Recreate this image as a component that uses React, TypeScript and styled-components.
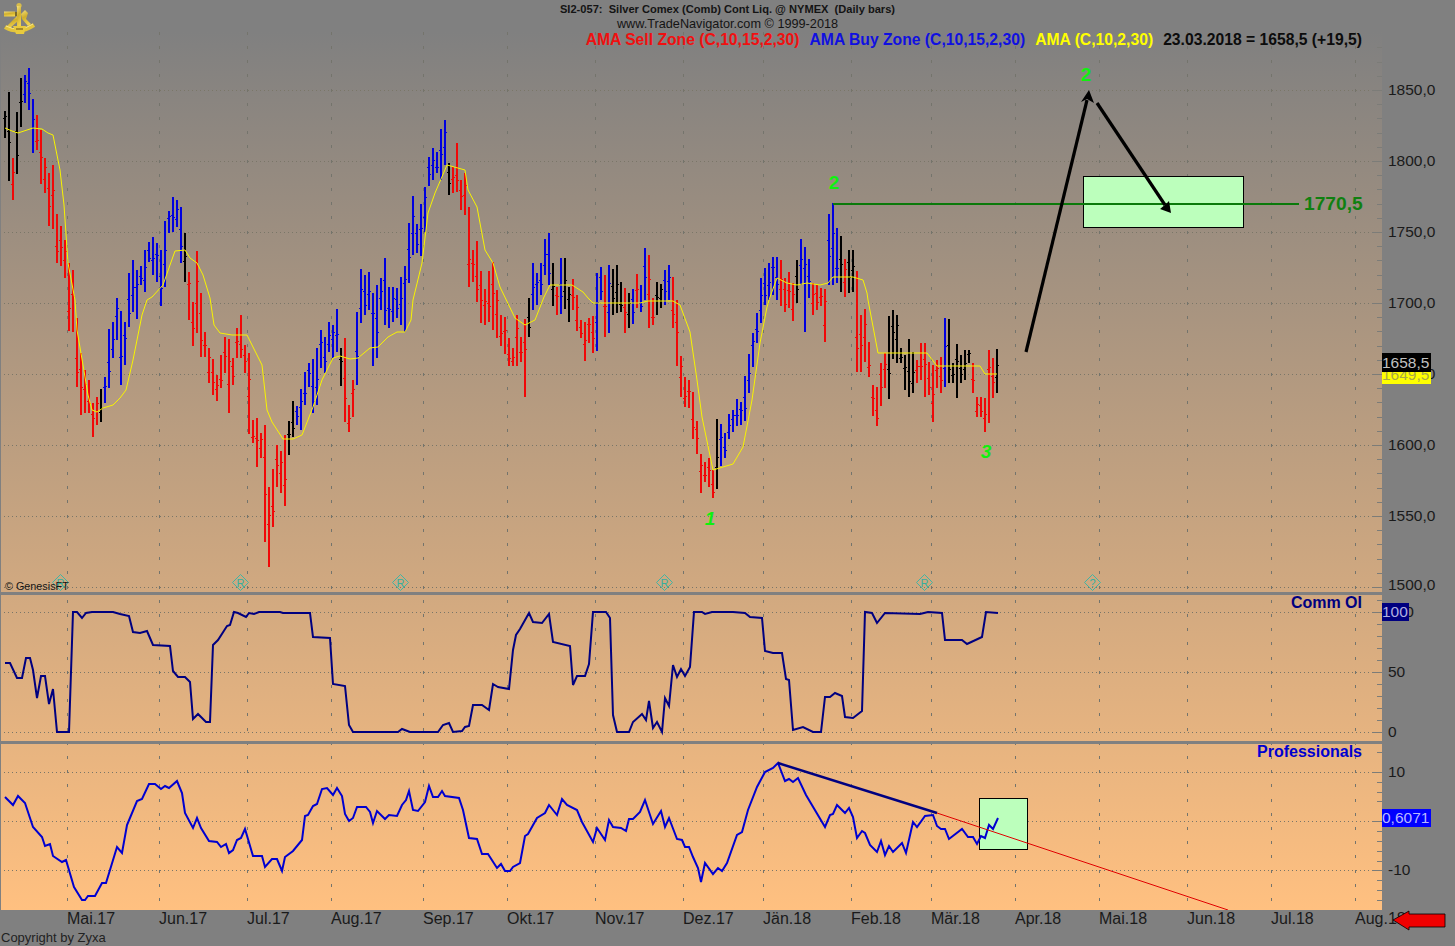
import styled, { createGlobalStyle } from "styled-components";

const CHART_W = 1382;
const TOP = 32;

const GlobalStyle = createGlobalStyle`
  html, body {
    margin: 0;
    padding: 0;
    background: #808080;
    font-family: "Liberation Sans", Arial, sans-serif;
    overflow: hidden;
  }
`;

const Screen = styled.div`
  position: relative;
  display: grid;
  grid-template-columns: ${CHART_W}px 73px;
  grid-template-rows: ${TOP}px 878px 36px;
  width: 1455px;
  height: 946px;
  background: #808080;
  overflow: hidden;
`;

const TopBar = styled.header`
  grid-column: 1 / 3;
  position: relative;
  display: flex;
  flex-direction: column;
  align-items: center;
  padding-top: 2px;
  color: #141414;
`;

const ChartTitle = styled.div`
  font-size: 11.1px;
  font-weight: 700;
  line-height: 14px;
  white-space: pre;
`;

const ChartSource = styled.div`
  font-size: 12.7px;
  line-height: 17px;
  white-space: pre;
`;

const LogoMark = styled.svg`
  position: absolute;
  left: 3px;
  top: 2px;
  width: 33px;
  height: 34px;
  z-index: 3;
`;

const Plot = styled.main`
  display: flex;
  flex-direction: column;
  background: linear-gradient(180deg, #808080 0%, #ffc080 100%);
  box-shadow: inset 1px 0 0 #808080;
`;

const Panel = styled.section<{ $h: number }>`
  position: relative;
  display: flex;
  flex-direction: column;
  flex: 0 0 ${(p) => p.$h}px;
  height: ${(p) => p.$h}px;
`;

const Separator = styled.div`
  flex: 0 0 3px;
  background: #808080;
`;

const ChartSvg = styled.svg`
  position: absolute;
  left: 0;
  top: 0;
  width: 100%;
  height: 100%;
  display: block;
`;

const Legend = styled.div`
  position: relative;
  z-index: 2;
  display: flex;
  justify-content: flex-end;
  gap: 10px;
  padding-right: 20px;
  height: 15px;
  font-size: 15.7px;
  font-weight: 700;
  line-height: 15px;
  white-space: nowrap;
`;

const LegendItem = styled.span<{ $color: string }>`
  color: ${(p) => p.$color};
`;

const PaneName = styled.div<{ $color: string }>`
  position: relative;
  z-index: 2;
  align-self: flex-end;
  padding-right: 20px;
  font-size: 16px;
  font-weight: 700;
  line-height: 15px;
  color: ${(p) => p.$color};
`;

const Credit = styled.div`
  position: relative;
  z-index: 2;
  margin-top: auto;
  margin-bottom: -1px;
  padding-left: 5px;
  font-size: 10.8px;
  line-height: 14px;
  color: #141414;
`;

const PriceAxis = styled.aside`
  position: relative;
  display: flex;
  flex-direction: column;
  padding-left: 6px;
  color: #1a1a1a;
`;

const AxisLabel = styled.div<{ $gap: number }>`
  flex: 0 0 18px;
  margin-top: ${(p) => p.$gap}px;
  font-size: 15.5px;
  line-height: 18px;
  white-space: nowrap;
`;

const ValueTag = styled.div<{ $y: number; $h: number; $w: number; $bg: string; $fg: string }>`
  position: absolute;
  left: 0;
  top: ${(p) => p.$y - TOP}px;
  width: ${(p) => p.$w}px;
  height: ${(p) => p.$h}px;
  background: ${(p) => p.$bg};
  color: ${(p) => p.$fg};
  font-size: 15.5px;
  line-height: ${(p) => p.$h}px;
  overflow: hidden;
  white-space: nowrap;
`;

const BottomBar = styled.footer`
  grid-column: 1 / 3;
  position: relative;
  display: flex;
  flex-direction: column;
  color: #1a1a1a;
`;

const MonthRow = styled.div`
  display: flex;
  height: 18px;
  padding-left: 67px;
`;

const Month = styled.span<{ $w: number }>`
  flex: 0 0 ${(p) => p.$w}px;
  font-size: 16px;
  line-height: 18px;
  white-space: nowrap;
`;

const Copyright = styled.div`
  margin-top: 3px;
  padding-left: 1px;
  font-size: 13px;
  line-height: 14px;
  color: #222;
`;

const ScrollArrow = styled.svg`
  position: absolute;
  right: 8px;
  top: 0;
  width: 55px;
  height: 21px;
`;

const WaveMark = styled.text<{ $italic?: boolean }>`
  font-family: "Liberation Sans", Arial, sans-serif;
  font-size: 19px;
  font-weight: 700;
  font-style: ${(p) => (p.$italic ? "italic" : "normal")};
  fill: #10f010;
  text-anchor: middle;
`;

const TargetLabel = styled.text`
  font-family: "Liberation Sans", Arial, sans-serif;
  font-size: 19.2px;
  font-weight: 700;
  fill: #108010;
`;

const DiamondLetter = styled.text`
  font-family: "Liberation Sans", Arial, sans-serif;
  font-size: 11px;
  fill: #35b0a0;
  text-anchor: middle;
`;

// price bars read off the chart: colour, high y - low y, one bar every 4px
const BAR_DATA = `k111-138 k92-181 r158-200 k112-174 k78-127 b75-103 b68-110 b99-153 r115-150 r130-184
r158-193 r173-226 r165-229 r214-263 r226-266 r240-278 r263-331 r270-332 r318-387 r353-415
r370-413 r380-413 r403-437 r397-425 k389-422 b377-403 b329-388 b322-358 b298-340 b311-385
b322-365 b273-327 b260-312 b270-319 b266-285 b250-292 b242-262 b237-275 b243-282 b250-306
b221-287 b211-233 b197-232 b200-227 b207-263 k233-282 r272-320 r302-346 r251-333 r293-357
r332-357 r348-383 r359-395 r375-401 r355-388 r337-373 r339-413 r358-385 r328-358 r315-358
r345-373 r353-434 r420-443 r418-467 r433-458 r425-542 r487-567 r469-527 r445-487 r451-493
r435-506 k421-455 k401-437 b406-425 b389-430 b372-405 b363-387 b359-413 b348-405 b330-368
b337-373 b322-352 b325-358 b309-352 k348-386 r338-422 r405-432 r380-417 b312-385 b269-323
b275-315 b272-310 b293-366 b285-358 b278-310 b258-325 b287-328 b287-322 b288-318 b277-325
b266-332 b223-283 b196-255 b224-253 b204-256 b187-232 b157-186 b148-180 b152-173 b129-180
b120-165 k163-195 r167-193 r143-192 r180-210 r173-215 r207-287 r250-282 r241-302 r271-323
r289-325 r271-322 r262-330 r290-338 r315-346 r317-354 r338-366 r348-366 r315-366 r337-362
r319-397 k298-337 b263-310 b273-305 b263-295 b239-275 b233-285 k263-306 r287-315 b258-314
k258-309 k287-322 r279-310 r295-331 r320-338 r322-361 r318-343 r316-353 b273-351 b267-300
r275-337 b265-333 k269-315 k265-313 k282-312 r288-333 k293-328 b289-324 r274-308 b285-312
b248-300 r255-328 r298-325 k282-315 k284-308 b270-305 b265-300 r277-328 r300-366 r356-397
r377-407 r380-408 r392-439 r421-454 r454-493 r462-482 r458-487 r470-498 k419-489 b424-466
b433-458 b414-439 b410-432 b399-426 b402-425 b376-421 b354-393 b333-367 b313-343 b278-323
b268-305 b263-300 b257-295 b257-300 r260-306 r278-312 r272-308 r283-321 k260-303 b239-285
b247-332 b259-298 r283-315 r285-310 r288-306 r289-342 b214-285 b203-285 b228-283 k236-292
r259-297 k250-293 k250-292 r271-372 r315-372 r309-362 r342-377 r385-416 r387-426 r363-406
r353-388 k316-399 k310-359 k315-363 k348-363 k355-390 k339-397 k352-393 r360-383 r343-380
r343-397 r362-395 r365-422 r360-388 r357-393 b318-387 k319-383 k363-383 k344-398 k355-383
k350-380 k350-363 r363-393 r397-417 r397-417 r398-432 r350-423 r358-398 k349-393`;

const BAR_COLORS: Record<string, string> = { r: "#f00808", b: "#0000e0", k: "#000000" };

const AMA_LINE =
  "5,128 12,131 18,133 24,131 33,128 42,129 48,133 53,135 56,150 60,170 64,205 68,263 75,300 77,330 83,365 88,395 92,410 97,412 103,408 113,405 120,398 126,390 133,360 137,340 142,315 147,300 152,297 163,285 170,265 175,251 185,250 190,258 197,263 203,275 210,298 214,325 220,333 232,335 247,335 262,365 267,410 272,422 283,439 293,439 302,435 313,407 322,380 333,358 340,356 350,359 358,358 370,348 378,347 388,337 397,332 405,332 411,320 413,300 422,263 428,213 435,193 447,165 465,170 468,190 477,207 485,250 493,263 500,287 515,318 525,325 535,320 544,297 550,285 558,285 572,285 583,292 588,298 593,303 610,303 640,303 648,301 673,301 680,305 690,332 697,380 702,417 713,470 733,464 743,447 752,400 760,343 767,307 770,297 777,278 787,283 797,285 807,283 820,285 828,283 833,277 853,277 863,280 867,293 868,300 878,353 927,353 937,366 980,366 985,374 997,374";

const COMM_LINE =
  "5,663 10,663 17,678 22,678 26,658 30,658 33,670 37,698 41,676 45,676 49,704 53,689 57,732 69,732 73,612 77,612 82,618 86,613 92,612 113,612 120,614 129,616 133,632 140,633 147,631 153,645 170,646 173,671 178,677 185,677 190,682 193,719 198,714 206,722 210,722 213,645 218,640 227,626 230,625 234,612 238,613 246,617 249,613 254,614 259,612 280,612 283,613 310,613 313,637 330,638 333,684 345,686 349,725 353,732 398,732 402,729 410,732 438,732 443,725 449,723 453,732 462,731 465,727 469,726 473,705 482,705 489,710 493,684 498,687 509,689 513,650 516,635 520,629 529,613 533,622 542,623 549,614 553,642 570,646 573,685 577,676 585,676 589,664 593,612 606,612 610,618 613,715 617,732 629,732 633,722 642,714 646,720 649,701 653,728 657,722 662,732 665,698 669,706 673,665 677,677 681,669 685,676 690,667 694,612 702,612 705,614 712,612 733,612 745,613 750,617 762,618 765,651 773,653 782,653 786,679 789,680 793,730 803,727 813,732 821,732 825,697 830,697 835,693 842,696 845,717 853,718 862,711 865,612 872,613 877,623 885,613 920,614 928,612 942,613 945,640 962,640 967,644 982,637 986,612 998,613";

const PRO_LINE =
  "5,797 13,805 18,796 25,803 33,827 42,837 45,846 50,844 53,856 62,862 66,860 74,887 82,900 85,900 88,896 95,896 102,883 106,883 117,847 122,853 127,825 137,801 142,799 149,784 155,784 161,789 165,786 169,788 177,781 182,793 185,813 193,828 197,818 201,828 209,841 217,842 221,847 226,844 229,853 233,850 237,840 241,838 245,829 253,856 262,856 265,867 272,859 277,859 282,871 285,857 293,851 302,840 305,816 308,815 313,806 317,804 322,789 327,788 333,795 337,788 342,796 345,814 349,821 353,818 357,807 366,807 370,812 373,823 377,811 385,819 389,815 397,816 402,805 406,800 409,791 413,810 418,811 425,802 429,786 433,797 438,797 442,791 445,796 459,798 463,810 469,838 477,839 482,854 488,854 497,868 501,864 505,871 510,871 513,867 520,863 525,836 528,834 537,818 545,813 549,805 557,815 562,799 567,805 577,810 582,822 593,842 597,828 605,840 609,820 613,827 621,828 626,831 629,819 633,819 640,812 645,800 653,824 661,811 665,827 669,818 677,839 682,840 685,847 689,847 693,857 698,868 701,882 705,863 713,874 718,868 722,871 727,863 737,835 742,832 748,810 757,787 765,772 773,768 778,763 785,781 789,779 793,782 798,778 806,795 825,827 830,815 833,814 837,805 845,813 849,808 853,817 857,838 862,831 865,833 870,845 877,852 881,841 885,855 889,846 893,852 902,843 906,853 913,822 917,827 925,816 933,815 937,826 941,829 945,829 949,839 962,829 968,837 973,837 977,844 981,836 985,838 989,825 993,829 998,818";

const MONTHS: [string, number][] = [
  ["Mai.17", 67], ["Jun.17", 159], ["Jul.17", 247], ["Aug.17", 331], ["Sep.17", 423], ["Okt.17", 507],
  ["Nov.17", 595], ["Dez.17", 683], ["Jän.18", 763], ["Feb.18", 851], ["Mär.18", 931], ["Apr.18", 1015],
  ["Mai.18", 1099], ["Jun.18", 1187], ["Jul.18", 1271], ["Aug.18", 1355],
];

const AXIS_LABELS: [string, number][] = [
  ["1850,0", 90], ["1800,0", 161], ["1750,0", 232], ["1700,0", 303], ["1650,0", 374], ["1600,0", 445],
  ["1550,0", 516], ["1500,0", 585], ["100", 612], ["50", 672], ["0", 732], ["10", 772], ["0", 821], ["-10", 870],
];

const DIAMONDS: [number, string][] = [[60, "R"], [240, "R"], [400, "R"], [664, "R"], [924, "R"], [1092, "?"]];

const bars = BAR_DATA.trim().split(/\s+/).map((token, i) => {
  const [hi, lo] = token.slice(1).split("-").map(Number);
  const x = 5 + 4 * i;
  const open = Math.round(hi + (lo - hi) * (0.25 + ((i * 0.37) % 1) * 0.5));
  const close = Math.round(hi + (lo - hi) * (0.2 + ((i * 0.61) % 1) * 0.6));
  return { color: token[0], x, hi, lo, open, close };
});

const barPath = (color: string) =>
  bars
    .filter((b) => b.color === color)
    .map((b) => `M${b.x} ${b.hi}V${b.lo}`)
    .join("");

const barTicks = (color: string) =>
  bars
    .filter((b) => b.color === color)
    .map((b) => `M${b.x - 2} ${b.open + 0.5}h1M${b.x + 1} ${b.close + 0.5}h1`)
    .join("");

const GridLines = ({ rows, ticks }: { rows: number[]; ticks: number[] }) => (
  <g shapeRendering="crispEdges" fill="none">
    {MONTHS.map(([name, x]) => (
      <line
        key={name}
        x1={x + 0.5}
        x2={x + 0.5}
        y1={TOP}
        y2={910}
        stroke="#74746c"
        strokeDasharray="3 11.2"
        strokeDashoffset="0.2"
      />
    ))}
    {rows.map((y) => (
      <line key={y} x1={4} x2={1372} y1={y + 0.5} y2={y + 0.5} stroke="#7a7668" strokeDasharray="1 3" />
    ))}
    {rows.map((y) => (
      <line key={y} x1={1372} x2={CHART_W} y1={y + 0.5} y2={y + 0.5} stroke="#7c7c78" />
    ))}
    {ticks.map((y) => (
      <line key={y} x1={1377} x2={CHART_W} y1={y + 0.5} y2={y + 0.5} stroke="#7c7c78" />
    ))}
  </g>
);

const range = (from: number, to: number, step: number) => {
  const out: number[] = [];
  for (let y = from; y <= to; y += step) out.push(Math.round(y));
  return out;
};

const mainRows = [90, 161, 232, 303, 374, 445, 516, 587];
const commRows = [612, 672, 732];
const proRows = [772, 821, 870];

const PriceChart = () => (
  <ChartSvg viewBox={`0 ${TOP} ${CHART_W} 560`}>
    <GridLines rows={mainRows} ticks={range(47.4, 587, 14.2).filter((y) => !mainRows.includes(y))} />
    {DIAMONDS.map(([x, mark]) => (
      <g key={x}>
        <polygon
          points={`${x + 0.5},574.5 ${x + 8.5},582.5 ${x + 0.5},590.5 ${x - 7.5},582.5`}
          fill="none"
          stroke="#40b4a4"
        />
        <DiamondLetter x={x + 0.5} y={587}>
          {mark}
        </DiamondLetter>
      </g>
    ))}
    {["r", "b", "k"].map((c) => (
      <g key={c} fill="none" stroke={BAR_COLORS[c]} shapeRendering="crispEdges">
        <path d={barPath(c)} strokeWidth={2} />
        <path d={barTicks(c)} strokeWidth={1} />
      </g>
    ))}
    <polyline points={AMA_LINE} fill="none" stroke="#f8f400" strokeWidth={1} />
    <rect x={1083.5} y={176.5} width={160} height={51} fill="#bcffbc" stroke="#000" shapeRendering="crispEdges" />
    <polyline points="833,203.5 1299,203.5" fill="none" stroke="#0a7a0a" strokeWidth={2} shapeRendering="crispEdges" />
    <line x1={1026} y1={352} x2={1087} y2={100} stroke="#000" strokeWidth={3.2} />
    <polygon points="1089,90 1094,103 1087,99 1081,102" fill="#000" />
    <line x1={1097} y1={103} x2={1165} y2={205} stroke="#000" strokeWidth={3.2} />
    <polygon points="1171,213 1160,209 1166,204 1169,201" fill="#000" />
    <WaveMark x={1086} y={81}>2</WaveMark>
    <WaveMark x={834} y={189}>2</WaveMark>
    <WaveMark x={710} y={525} $italic>1</WaveMark>
    <WaveMark x={986} y={458} $italic>3</WaveMark>
    <TargetLabel x={1304} y={210}>1770,5</TargetLabel>
  </ChartSvg>
);

const CommChart = () => (
  <ChartSvg viewBox={`0 595 ${CHART_W} 146`}>
    <GridLines rows={commRows} ticks={range(600, 732, 12).filter((y) => !commRows.includes(y))} />
    <polyline points={COMM_LINE} fill="none" stroke="#000080" strokeWidth={2} />
  </ChartSvg>
);

const ProChart = () => (
  <ChartSvg viewBox={`0 744 ${CHART_W} 166`}>
    <GridLines rows={proRows} ticks={[752, 782, 792, 801, 831, 841, 851, 861, 880, 890, 900]} />
    <rect x={979.5} y={798.5} width={48} height={51} fill="#bcffbc" stroke="#000" shapeRendering="crispEdges" />
    <polyline points={PRO_LINE} fill="none" stroke="#0000d0" strokeWidth={2} />
    <line x1={778} y1={763} x2={937} y2={813} stroke="#000080" strokeWidth={2.4} />
    <line x1={937} y1={813} x2={1228} y2={910} stroke="#e00000" strokeWidth={1} />
  </ChartSvg>
);

// gold sextant in the top left corner
const Logo = () => (
  <LogoMark viewBox="0 0 33 34">
    <defs>
      <linearGradient id="gold" x1="0" y1="0" x2="0.3" y2="1">
        <stop offset="0" stopColor="#f4e07c" />
        <stop offset="0.5" stopColor="#cfae2c" />
        <stop offset="1" stopColor="#f0d24a" />
      </linearGradient>
    </defs>
    <circle cx={16} cy={3.5} r={2.6} fill="#d8bc4a" />
    <rect x={14} y={4} width={4} height={21} fill="url(#gold)" />
    <rect x={1} y={9.5} width={11} height={5} fill="url(#gold)" />
    <rect x={12} y={10} width={2} height={4} fill="#7a6a2a" />
    <path d="M18 12l4-4 3 3-2 6 5 5-3 2-6-7z" fill="url(#gold)" />
    <path d="M14 14L4 24l3 2 8-7z" fill="url(#gold)" />
    <path d="M2 25Q16 33 31 23" fill="none" stroke="#e2c43c" strokeWidth={4} />
    <path d="M3 24Q16 31 30 22" fill="none" stroke="#f8e88a" strokeWidth={1} />
    <path d="M10 24h13l-2 8h-8z" fill="#e8ca3e" />
    <path d="M13 27h7" stroke="#8a7020" strokeWidth={1.4} />
  </LogoMark>
);

export default function App() {
  let prev = TOP;
  const axisRows = AXIS_LABELS.map(([text, y], i) => {
    const gap = y - 9 - prev;
    prev = y + 9;
    return (
      <AxisLabel key={i} $gap={gap}>
        {text}
      </AxisLabel>
    );
  });

  return (
    <Screen>
      <GlobalStyle />
      <TopBar>
        <Logo />
        <ChartTitle>{"SI2-057:  Silver Comex (Comb) Cont Liq. @ NYMEX  (Daily bars)"}</ChartTitle>
        <ChartSource>www.TradeNavigator.com © 1999-2018</ChartSource>
      </TopBar>

      <Plot>
        <Panel $h={560}>
          <PriceChart />
          <Legend>
            <LegendItem $color="#f01010">AMA Sell Zone (C,10,15,2,30)</LegendItem>
            <LegendItem $color="#1010e0">AMA Buy Zone (C,10,15,2,30)</LegendItem>
            <LegendItem $color="#ffff00">AMA (C,10,2,30)</LegendItem>
            <LegendItem $color="#0c0c0c">23.03.2018 = 1658,5 (+19,5)</LegendItem>
          </Legend>
          <Credit>© GenesisFT</Credit>
        </Panel>
        <Separator />
        <Panel $h={146}>
          <CommChart />
          <PaneName $color="#000080">Comm OI</PaneName>
        </Panel>
        <Separator />
        <Panel $h={166}>
          <ProChart />
          <PaneName $color="#0000d0">Professionals</PaneName>
        </Panel>
      </Plot>

      <PriceAxis>
        {axisRows}
        <ValueTag $y={365} $h={19} $w={49} $bg="#ffff00" $fg="#a8a848">1649,5</ValueTag>
        <ValueTag $y={353} $h={19} $w={49} $bg="#000000" $fg="#c0c0c0">1658,5</ValueTag>
        <ValueTag $y={603} $h={18} $w={27} $bg="#000080" $fg="#b0b0e0">100</ValueTag>
        <ValueTag $y={809} $h={18} $w={49} $bg="#0000ff" $fg="#b8b8ff">0,6071</ValueTag>
      </PriceAxis>

      <BottomBar>
        <MonthRow>
          {MONTHS.map(([name, x], i) => (
            <Month key={name} $w={(MONTHS[i + 1]?.[1] ?? x + 60) - x}>
              {name}
            </Month>
          ))}
        </MonthRow>
        <Copyright>Copyright by Zyxa</Copyright>
        <ScrollArrow viewBox="0 0 55 21">
          <path d="M1 10L17 1v3h36v13H17v3z" fill="#f00000" stroke="#000" strokeWidth={0.8} />
        </ScrollArrow>
      </BottomBar>
    </Screen>
  );
}
